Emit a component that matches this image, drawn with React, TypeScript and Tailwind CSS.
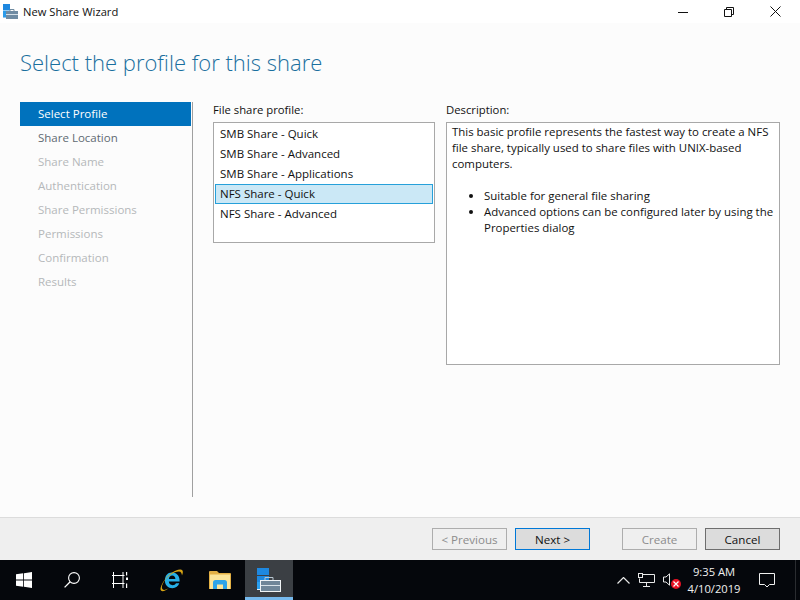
const font = "font-['Open_Sans','Noto_Sans',sans-serif]";

const steps = [
  'Select Profile',
  'Share Location',
  'Share Name',
  'Authentication',
  'Share Permissions',
  'Permissions',
  'Confirmation',
  'Results',
];

const profiles = [
  'SMB Share - Quick',
  'SMB Share - Advanced',
  'SMB Share - Applications',
  'NFS Share - Quick',
  'NFS Share - Advanced',
];

const WizardIcon = () => (
  <svg width="15" height="16" viewBox="0 0 15 16">
    <path d="M0 0h7v6H0z" fill="#1e88e0" />
    <path d="M0 6.500h7V13H0z" fill="#2a9bea" />
    <path d="M7 7V5.500h4V7" fill="none" stroke="#6f8aa0" />
    <rect x="3" y="7" width="12" height="8" fill="#6f8ba3" />
    <path d="M3 10.500h12" stroke="#d5e0e8" />
    <path d="M0 13h3v1H0z" fill="#8fc4ee" />
  </svg>
);

const WindowButtons = () => (
  <div className="flex items-center h-[23px] pr-[2px]">
    <div className="w-[46px] flex justify-center">
      <svg width="10" height="10" viewBox="0 0 10 10"><path d="M0 5.500h10" stroke="#111" /></svg>
    </div>
    <div className="w-[46px] flex justify-center">
      <svg width="10" height="10" viewBox="0 0 10 10" fill="none" stroke="#111">
        <path d="M2.500 2.500V.5h7v7h-2" />
        <path d="M.5 2.500h7v7h-7z" />
      </svg>
    </div>
    <div className="w-[46px] flex justify-center">
      <svg width="11" height="11" viewBox="0 0 11 11" stroke="#111"><path d="M.5.5l10 10M10.500.5l-10 10" /></svg>
    </div>
  </div>
);

const WizButton = ({ label, kind }: { label: string; kind: 'off' | 'focus' | 'normal' }) => {
  const cls =
    kind === 'off'
      ? 'border-[#adadad] bg-[#efefef] text-[#8c8c8c]'
      : kind === 'focus'
        ? 'border-[#0078d7] bg-[#dcdcdc] text-[#111]'
        : 'border-[#6e6e6e] bg-[#dcdcdc] text-[#111]';
  return (
    <div className={`w-[75px] h-[22px] border flex items-center justify-center pt-[2px] text-[11.6px] ${cls}`}>
      {label}
    </div>
  );
};

const TaskbarIcons = () => (
  <div className="flex items-center h-full">
    <div className="w-[48px] flex justify-center">
      <svg width="16" height="16" viewBox="0 0 16 16" fill="#fff">
        <path d="M0 2.300l7.200-1v6.300H0zM8 1.200L16 0v7.600H8zM0 8.400h7.200v6.300L0 13.700zM8 8.400h8V16l-8-1.200z" />
      </svg>
    </div>
    <div className="w-[48px] flex justify-center">
      <svg width="16" height="16" viewBox="0 0 16 16" fill="none" stroke="#fff" strokeWidth="1.100">
        <circle cx="10" cy="6" r="5.400" />
        <path d="M6.200 9.800L.6 15.400" strokeWidth="1.300" />
      </svg>
    </div>
    <div className="w-[48px] flex justify-center">
      <svg width="16" height="16" viewBox="0 0 16 16" fill="none" stroke="#fff">
        <path d="M1.500 0v3.500M11 0v3.500M0 3.500h12.500M1.500 3.500v8M11 3.500v8M0 11.500h12.500M1.500 11.500V16M11 11.500V16" />
        <path d="M14 0h1.200v3.500H14zM14 5.500h2.200v2.500H14zM14 11.500h1.200V16H14z" fill="#fff" stroke="none" />
      </svg>
    </div>
    {/* pinned apps sit a little apart from the system buttons */}
    <div className="w-[48px] ml-[5px] pr-[2px] flex justify-center">
      <svg width="24" height="24" viewBox="0 0 24 24">
        <path d="M12 4.600c4.400 0 7.600 3.200 7.600 7.900v1.100H8.800c.2 2.300 1.700 3.600 3.800 3.600 1.600 0 2.800-.7 3.400-1.900h3.300c-1 3-3.500 4.900-6.900 4.900-4.400 0-7.500-3.100-7.500-7.700 0-4.800 2.800-7.900 6.600-7.900zm-3.100 6.300h6.500c-.1-2-1.300-3.300-3.200-3.300s-3.100 1.300-3.300 3.300z" fill="#27b0e8" fillRule="evenodd" />
        <path d="M5 11.500C8.500 6.500 15.500 1 20.500 1.400c2.600.2 3 2.600 1.500 6.100-.2-2.300-1-3.900-3-4C14.500 3.200 7.500 8 4 13.500 1.500 17.500 1.200 21 3.200 21.800c1.400.5 3.600-.4 5.800-2-3 2.800-6.300 4.300-7.800 3C-.5 21.500.8 17 5 11.500z" fill="#d9a514" />
      </svg>
    </div>
    <div className="w-[48px] pr-[2px] flex justify-center">
      <svg width="22" height="18" viewBox="0 0 22 18">
        <path d="M0 1A1 1 0 0 1 1 0h7l2 2h11a1 1 0 0 1 1 1v15H0z" fill="#e3b045" />
        <path d="M1 3.500h20V18H1z" fill="#fce59a" />
        <path d="M4 18v-6.500Q4 9 6.500 9h9Q18 9 18 11.500V18h-4v-4.500H8V18z" fill="#2ea4e8" />
      </svg>
    </div>
    <div className="w-[48px] h-full bg-[#3b3f44] border-b-[3px] border-[#76b9ed] flex justify-center items-center">
      <div className="w-[44px] flex justify-center pt-[3px]">
        <svg width="24" height="24" viewBox="0 0 24 24">
          <path d="M0 0h12v7H0zM0 8h12v6H0z" fill="#1e88e0" />
          <path d="M0 14h4v8H0z" fill="#2aa0f0" />
          <path d="M0 21.500h4" stroke="#e8f2fa" />
          <path d="M8 12v-2.500h8V12" fill="none" stroke="#b8c6d0" />
          <rect x="3.500" y="12.500" width="20" height="11" fill="#6f8698" stroke="#f0f4f6" />
          <path d="M4 17.500h19" stroke="#d8e2e8" />
        </svg>
      </div>
    </div>
  </div>
);

const TrayIcons = () => (
  <div className="flex items-center h-full">
    <svg className="mr-[8px]" width="13" height="7" viewBox="0 0 13 7" fill="none" stroke="#e8e8e8" strokeWidth="1.200">
      <path d="M.5 6.500l6-6 6 6" />
    </svg>
    <svg className="mr-[8px]" width="17" height="14" viewBox="0 0 17 14" fill="none" stroke="#e8e8e8">
      <path d="M4.500 1.500h12v8H1.500V5.500" />
      <rect x="0.500" y="0.500" width="4" height="4" fill="#05070c" />
      <path d="M8.500 9.500v4M5 13.500h7" />
    </svg>
    <div className="relative w-[18px] h-[16px] mr-[6px] mt-[2px]">
      <svg width="7" height="13" viewBox="0 0 7 13" fill="none" stroke="#e8e8e8">
        <path d="M6.500.8v11.400L3 9H.5V4H3z" />
      </svg>
      <div className="absolute right-0 bottom-0 w-[10px] h-[10px] rounded-full bg-[#e81123] flex items-center justify-center">
        <svg width="6" height="6" viewBox="0 0 6 6" stroke="#fff" strokeWidth="1.200"><path d="M.5.5l5 5M5.500.5l-5 5" /></svg>
      </div>
    </div>
    <div className="w-[56px] pr-[2px] text-center text-[11.2px] leading-[17px] text-[#f0f0f0]">
      <div>9:35 AM</div>
      <div>4/10/2019</div>
    </div>
    <div className="w-[48px] flex justify-center">
      <svg width="16" height="15" viewBox="0 0 16 15" fill="none" stroke="#f0f0f0">
        <path d="M.5.500h15v11h-5L8 14l-2.500-2.500h-5z" />
      </svg>
    </div>
    <div className="ml-[4px] mr-[4px] w-px h-full bg-[#2a2c30]" />
  </div>
);

export default function App() {
  return (
    <div className={`w-[800px] h-[600px] flex flex-col overflow-hidden bg-white ${font}`}>
      {/* Title bar */}
      <div className="h-[23px] flex items-center justify-between bg-white">
        <div className="flex items-center pl-[3px] pt-[1px]">
          <WizardIcon />
          <span className="ml-[5px] text-[11.2px] text-[#111]">New Share Wizard</span>
        </div>
        <WindowButtons />
      </div>

      {/* Wizard body */}
      <div className="flex-1 flex flex-col bg-[#fcfcfc] pl-[20px]">
        <h1 className="h-[79px] pt-[21px] text-[22px] leading-[36px] font-light text-[#1a6f9e]">
          Select the profile for this share
        </h1>
        <div className="flex">
          <div className="w-[173px] h-[395px] border-r border-[#a0a0a0] flex flex-col">
            {steps.map((s, i) => (
              <div
                key={s}
                className={`h-[24px] w-[171px] pl-[18px] flex items-center text-[11.5px] ${
                  i === 0 ? 'bg-[#0072bd] text-white' : i === 1 ? 'text-[#5f6a72]' : 'text-[#b5b8ba]'
                }`}
              >
                {s}
              </div>
            ))}
          </div>

          <div className="ml-[20px] w-[222px]">
            <div className="h-[20px] text-[11.3px] leading-[16px] text-[#111]">File share profile:</div>
            <div className="h-[121px] border border-[#a8a8a8] bg-white p-px">
              {profiles.map((p, i) => (
                <div
                  key={p}
                  className={`h-[20px] pl-[4px] flex items-center text-[11.5px] text-[#111] ${
                    i === 3 ? 'border border-[#26a0da] bg-[#cbe8f6]' : 'border border-transparent'
                  }`}
                >
                  {p}
                </div>
              ))}
            </div>
          </div>

          <div className="ml-[11px] w-[334px]">
            <div className="h-[20px] text-[11.3px] leading-[16px] text-[#111]">Description:</div>
            <div className="h-[243px] border border-[#a8a8a8] bg-white pl-[5px] pt-[1px] text-[11.45px] leading-[16px] text-[#111]">
              <p>
                This basic profile represents the fastest way to create a NFS
                <br />
                file share, typically used to share files with UNIX-based
                <br />
                computers.
              </p>
              <ul className="mt-[16px] ml-[19px] list-disc pl-[13px]">
                <li>Suitable for general file sharing</li>
                <li>Advanced options can be configured later by using the Properties dialog</li>
              </ul>
            </div>
          </div>
        </div>
      </div>

      {/* Buttons */}
      <div className="h-[43px] bg-[#efefef] border-t border-[#dcdcdc] flex items-center justify-end pr-[20px]">
        <WizButton label="< Previous" kind="off" />
        <div className="w-[8px]" />
        <WizButton label="Next >" kind="focus" />
        <div className="w-[32px]" />
        <WizButton label="Create" kind="off" />
        <div className="w-[8px]" />
        <WizButton label="Cancel" kind="normal" />
      </div>

      {/* Taskbar */}
      <div className="h-[40px] bg-[#05070c] flex items-center justify-between">
        <TaskbarIcons />
        <TrayIcons />
      </div>
    </div>
  );
}
